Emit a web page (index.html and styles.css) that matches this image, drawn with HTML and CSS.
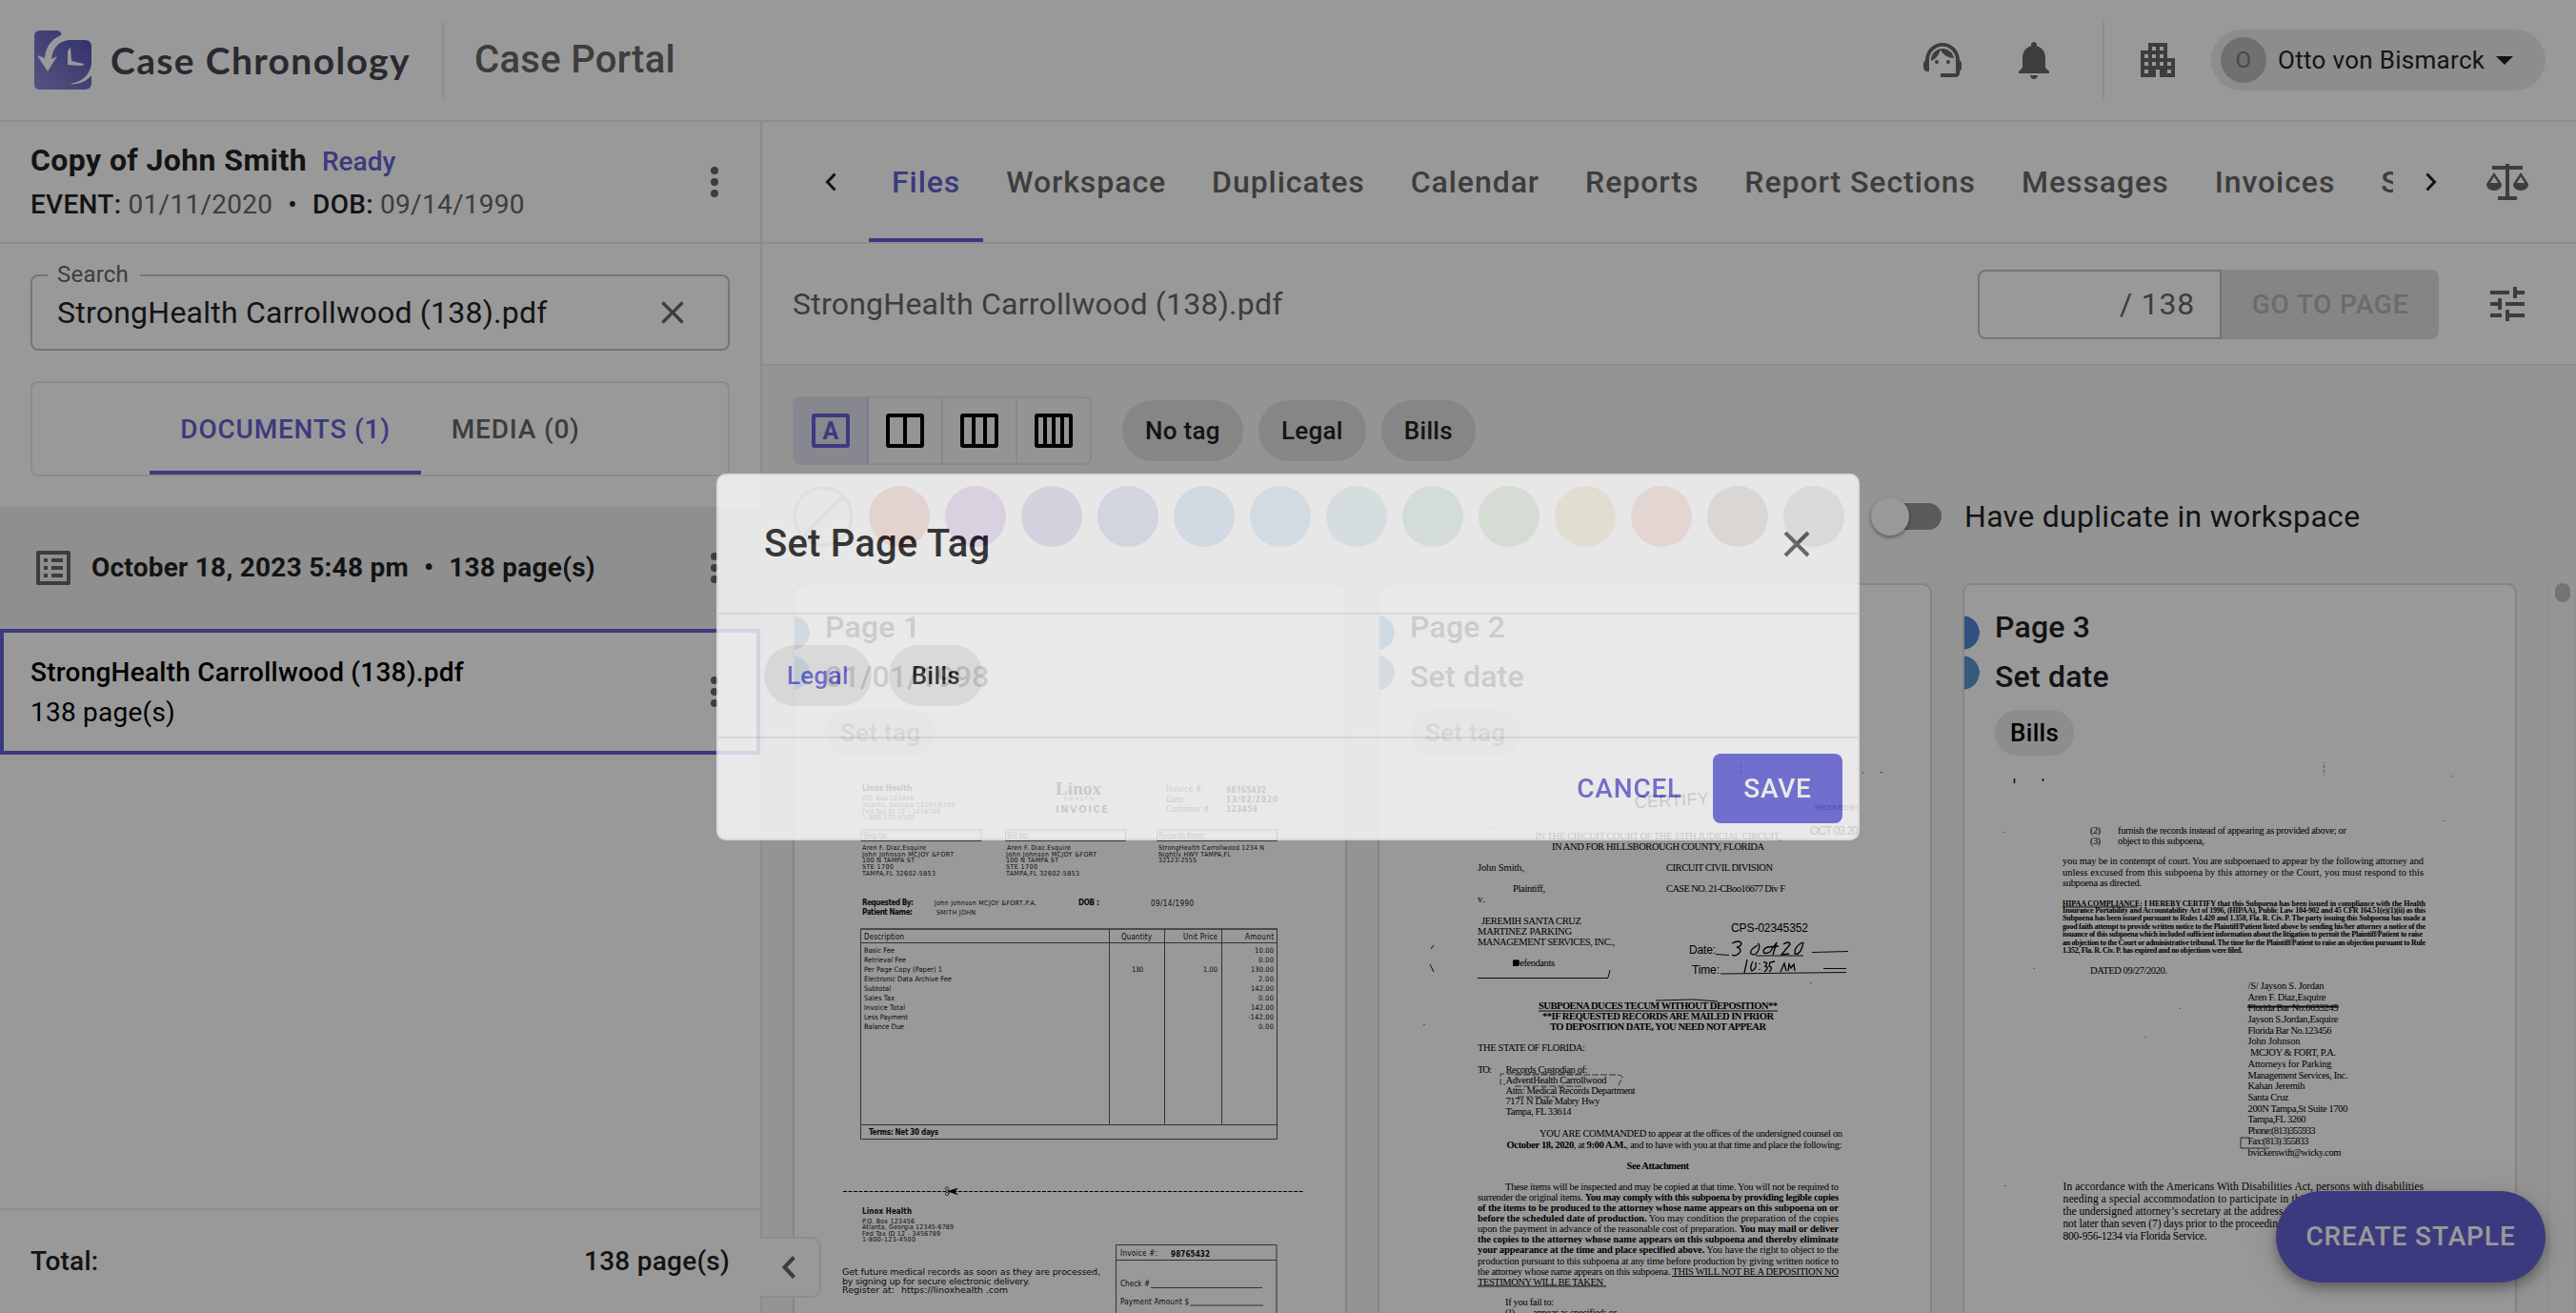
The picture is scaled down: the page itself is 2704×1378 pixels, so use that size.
FILE: index.html
```html
<!DOCTYPE html>
<html lang="en">
<head>
<meta charset="utf-8">
<title>Case Portal</title>
<link rel="stylesheet" href="styles.css">
</head>
<body>
<div class="app">
  <header class="header">
    <svg class="logo" viewBox="0 0 60 62">
      <defs><linearGradient id="lg" x1="0" y1="1" x2="1" y2="0"><stop offset="0" stop-color="#8d8bd8"/><stop offset=".5" stop-color="#7270c4"/><stop offset="1" stop-color="#504db4"/></linearGradient></defs>
      <path fill="url(#lg)" d="M6 0h18q5 1 4 5C18 9 12 17 11 29l-8-3 11 17 10-16-6 3C19 20 24 12 36 10h17q7 0 7 7v19c-3 12-10 18-23 20 11 1 18-3 23-9v8q0 7-7 7H6q-6 0-6-6V6q0-6 6-6z"/>
      <path fill="#fff" d="M35 36V22q2-4 3-4l1 14 13 3q1 1-3 2z"/>
    </svg>
    <span class="brand">Case Chronology</span>
    <span class="vline"></span>
    <span class="product">Case Portal</span>
    <span class="grow"></span>
    <svg class="ic support" viewBox="0 0 24 24"><path d="M21 12.22C21 6.73 16.74 3 12 3c-4.69 0-9 3.65-9 9.28-.6.34-1 .98-1 1.72v2c0 1.1.9 2 2 2h1v-6.1c0-3.87 3.13-7 7-7s7 3.13 7 7V19h-8v2h8c1.1 0 2-.9 2-2v-1.22c.59-.31 1-.92 1-1.64v-2.3c0-.7-.41-1.31-1-1.62z"/><circle cx="9" cy="13" r="1"/><circle cx="15" cy="13" r="1"/><path d="M18 11.03C17.52 8.18 15.04 6 12.05 6c-3.03 0-6.29 2.51-6.03 6.45 2.47-1.01 4.33-3.21 4.86-5.89 1.31 2.63 4 4.44 7.12 4.47z"/></svg>
    <svg class="ic bell" viewBox="0 0 24 24"><path d="M12 22c1.1 0 2-.9 2-2h-4c0 1.1.89 2 2 2zm6-6v-5c0-3.07-1.64-5.64-4.5-6.32V4c0-.83-.67-1.5-1.5-1.5s-1.5.67-1.5 1.5v.68C7.63 5.36 6 7.92 6 11v5l-2 2v1h16v-1l-2-2z"/></svg>
    <span class="vline v2"></span>
    <svg class="ic building" viewBox="0 0 24 24"><path d="M17 11V3H7v4H3v14h8v-4h2v4h8V11h-4zM7 19H5v-2h2v2zm0-4H5v-2h2v2zm0-4H5V9h2v2zm4 4H9v-2h2v2zm0-4H9V9h2v2zm0-4H9V5h2v2zm4 8h-2v-2h2v2zm0-4h-2V9h2v2zm0-4h-2V5h2v2zm4 12h-2v-2h2v2zm0-4h-2v-2h2v2z"/></svg>
    <div class="user"><span class="avatar">O</span><span>Otto von Bismarck</span><i class="caret"></i></div>
  </header>

  <div class="body">
    <aside class="side">
      <div class="case">
        <div class="case-info">
          <div class="l1"><b>Copy of John Smith</b><span class="ready">Ready</span></div>
          <div class="l2"><b>EVENT:</b> <span class="mut">01/11/2020</span><span class="bul">•</span><b>DOB:</b> <span class="mut">09/14/1990</span></div>
        </div>
        <span class="dots"><i></i><i></i><i></i></span>
      </div>
      <div class="side-top">
        <div class="search"><span class="lbl">Search</span><span>StrongHealth Carrollwood (138).pdf</span>
          <svg class="x" viewBox="0 0 24 24"><path d="M19 6.41 17.59 5 12 10.59 6.41 5 5 6.41 10.59 12 5 17.59 6.41 19 12 13.41 17.59 19 19 17.59 13.41 12z"/></svg></div>
        <div class="dtabs"><span class="on">DOCUMENTS (1)</span><span>MEDIA (0)</span></div>
      </div>
      <div class="group">
        <svg class="ic" viewBox="0 0 24 24"><path d="M19 5v14H5V5h14m1.1-2H3.900c-.5 0-.9.4-.9.9v16.200c0 .4.4.9.9.9h16.200c.4 0 .9-.5.9-.9V3.900c0-.5-.5-.9-.9-.9zM11 7h6v2h-6V7zm0 4h6v2h-6v-2zm0 4h6v2h-6zM7 7h2v2H7zm0 4h2v2H7zm0 4h2v2H7z"/></svg>
        <b>October 18, 2023 5:48 pm</b><b class="bul">•</b><b>138 page(s)</b>
        <span class="dots"><i></i><i></i><i></i></span>
      </div>
      <div class="file">
        <div><b>StrongHealth Carrollwood (138).pdf</b><span>138 page(s)</span></div>
        <span class="dots"><i></i><i></i><i></i></span>
      </div>
      <span class="grow"></span>
      <div class="total"><b>Total:</b><b>138 page(s)</b></div>
      <div class="collapse"><svg viewBox="0 0 15 24"><path d="M13 1.500 3 12l10 10.500" fill="none" stroke="#666" stroke-width="4"/></svg></div>
    </aside>

    <main class="main">
      <nav class="nav">
        <svg class="arr" viewBox="0 0 12 20"><path d="M10.500 1.500 2.500 10l8 8.500"/></svg>
        <div class="tabs"><span class="on">Files</span><span>Workspace</span><span>Duplicates</span><span>Calendar</span><span>Reports</span><span>Report Sections</span><span>Messages</span><span>Invoices</span><span>S</span></div>
        <svg class="arr right" viewBox="0 0 12 20"><path d="M1.500 1.500l8 8.500-8 8.500"/></svg>
        <svg class="scales" viewBox="0 0 44 38"><path d="M6 2h32v4H24v28h8v4H12v-4h8V6H6z M20 0h4v3h-4z"/><path fill-rule="evenodd" d="M8 9l8 12c0 4-3 7-8 7s-8-3-8-7zM8 13.500 3.800 20h8.400zM36 9l8 12c0 4-3 7-8 7s-8-3-8-7zM36 13.500 31.800 20h8.400z"/></svg>
      </nav>
      <div class="bar">
        <span>StrongHealth Carrollwood (138).pdf</span><span class="grow"></span>
        <span class="pageno">/ 138</span><span class="go">GO TO PAGE</span>
        <svg class="ic tune" viewBox="0 0 24 24"><path d="M3 17v2h6v-2H3zM3 5v2h10V5H3zm10 16v-2h8v-2h-8v-2h-2v6h2zM7 9v2H3v2h4v2h2V9H7zm14 4v-2H11v2h10zm-6-4h2V7h4V5h-4V3h-2v6z"/></svg>
      </div>
      <div class="filters">
        <div class="views">
          <span class="on"><svg viewBox="0 0 40 36"><rect x="2" y="2" width="36" height="32" rx="1"/><text x="20" y="27" text-anchor="middle">A</text></svg></span>
          <span><svg viewBox="0 0 40 36"><rect x="2" y="2" width="36" height="32" rx="1"/><path d="M20 3v30"/></svg></span>
          <span><svg viewBox="0 0 40 36"><rect x="2" y="2" width="36" height="32" rx="1"/><path d="M14 3v30M26 3v30"/></svg></span>
          <span><svg viewBox="0 0 40 36"><rect x="2" y="2" width="36" height="32" rx="1"/><path d="M11 3v30M20 3v30M29 3v30"/></svg></span>
        </div>
        <span class="chip">No tag</span><span class="chip">Legal</span><span class="chip">Bills</span>
      </div>
      <div class="colors">
        <svg class="none" viewBox="0 0 64 64"><circle cx="32" cy="32" r="30"/><path d="M11 53 53 11"/></svg>
        <i style="background:#cf5b52"></i><i style="background:#8a53b8"></i><i style="background:#6a58b8"></i><i style="background:#5865b8"></i><i style="background:#5087d3"></i><i style="background:#5796cf"></i><i style="background:#6bacb5"></i><i style="background:#64a099"></i><i style="background:#6ba05a"></i><i style="background:#c4ac52"></i><i style="background:#cc7058"></i><i style="background:#8a7463"></i><i style="background:#7d8794"></i>
        <span class="switch"></span><span>Have duplicate in workspace</span>
      </div>
      <div class="pages">
        <section class="card">
          <div class="head"><b>Page 1</b><b>01/01/1998</b><span class="tag unset">Set tag</span></div>
          <svg class="doc sans" viewBox="834 800 578 578">
            <text class="b" x="905" y="830" textLength="52">Linox Health</text>
            <g class="sm"><text x="905" y="840" textLength="54">P.O. Box 123456</text><text x="905" y="847" textLength="97">Atlanta, Georgia 12345-6789</text><text x="905" y="853.500" textLength="82">Fed Tax ID 12 - 3456789</text><text x="905" y="860" textLength="55">1-800-123-4500</text></g>
            <text class="s b" x="1108" y="834" font-size="19" textLength="48">Linox</text><text x="1117" y="840" font-size="6" textLength="31">HEALTH</text><text class="b" x="1108" y="853" font-size="11" textLength="55">INVOICE</text>
            <text x="1224" y="831" textLength="40">Invoice #:</text><text class="b" x="1287" y="832" textLength="42">98765432</text>
            <text x="1224" y="842" textLength="20">Date:</text><text class="b" x="1287" y="842" textLength="54">13/02/2020</text>
            <text x="1224" y="852" textLength="48">Customer #:</text><text class="b" x="1287" y="852" textLength="33">123456</text>
            <path class="ln" d="M904 882.500v-11.500h126v11.500zM1055.500 882.500v-11.500h126v11.500zM1214.500 882.500v-11.500h126v11.500z"/>
            <text x="906" y="880" textLength="26">Ship to:</text><text x="1057" y="880" textLength="23">Bill to:</text><text x="1216" y="880" textLength="49">Records from:</text>
            <g class="sm"><text x="905" y="891.500" textLength="67">Aren F. Diaz,Esquire</text><text x="905" y="898.500" textLength="96">John Johnson MCJOY &amp;FORT</text><text x="905" y="905" textLength="55">100 N TAMPA ST</text><text x="905" y="912" textLength="33">STE 1700</text><text x="905" y="918.500" textLength="77">TAMPA,FL 32602-5853</text>
            <text x="1057" y="891.500" textLength="67">Aren F. Diaz,Esquire</text><text x="1056" y="898.500" textLength="95">John Johnson MCJOY &amp;FORT</text><text x="1056" y="905" textLength="55">100 N TAMPA ST</text><text x="1056" y="912" textLength="33">STE 1700</text><text x="1056" y="918.500" textLength="77">TAMPA,FL 32602-5853</text>
            <text x="1216" y="891.500" textLength="111">StrongHealth Carrollwood 1234 N</text><text x="1216" y="898.500" textLength="76">Nightly HWY TAMPA,FL</text><text x="1216" y="905" textLength="40">32123-2555</text></g>
            <text class="b" x="905" y="950" textLength="54">Requested By:</text><text class="sm" x="981" y="950" textLength="107">John Johnson MCJOY &amp;FORT,P.A.</text><text class="b" x="1132" y="950" textLength="22">DOB :</text><text x="1208" y="951" textLength="45">09/14/1990</text>
            <text class="b" x="905" y="960" textLength="53">Patient Name:</text><text class="sm" x="983" y="960" textLength="41">SMITH JOHN</text>
            <path class="ln" d="M903.500 975v220.500h437V975M903 989.500h437M903 1180.500h437M1164.500 975v206M1222.500 975v206M1282.500 975v206"/><path class="ln th" d="M903 975h438"/>
            <text x="907" y="986" textLength="42">Description</text><text x="1177" y="986" textLength="32">Quantity</text><text x="1242" y="986" textLength="36">Unit Price</text><text x="1307" y="986" textLength="30">Amount</text>
            <g class="md"><text x="907" y="999.500" textLength="32">Basic Fee</text><text x="907" y="1009.500" textLength="44">Retrieval Fee</text><text x="907" y="1019.500" textLength="82">Per Page Copy (Paper) 1</text><text x="907" y="1029.500" textLength="92">Electronic Data Archive Fee</text><text x="907" y="1039.500" textLength="28">Subtotal</text><text x="907" y="1049.500" textLength="32">Sales Tax</text><text x="907" y="1060" textLength="43">Invoice Total</text><text x="907" y="1070" textLength="46">Less Payment</text><text x="907" y="1080" textLength="42">Balance Due</text>
            <text x="1188" y="1019.500" textLength="12">130</text><text x="1263" y="1019.500" textLength="15">1.00</text>
            <text x="1317" y="999.500" textLength="20">10.00</text><text x="1321" y="1009.500" textLength="16">0.00</text><text x="1313" y="1019.500" textLength="24">130.00</text><text x="1321" y="1029.500" textLength="16">2.00</text><text x="1313" y="1039.500" textLength="24">142.00</text><text x="1321" y="1049.500" textLength="16">0.00</text><text x="1313" y="1060" textLength="24">142.00</text><text x="1310" y="1070" textLength="27">-142.00</text><text x="1321" y="1080" textLength="16">0.00</text></g>
            <text class="b" x="912" y="1190.500" textLength="73">Terms: Net 30 days</text>
            <path d="M885 1250.500h484" stroke="#000" stroke-dasharray="4 1.500" fill="none"/><path d="M998 1249.500l7-2-4 3 4 3-7-2.500zM998 1250.500l-3-2M998 1250.500l-3 2.500" stroke="#000"/><circle cx="994" cy="1247.500" r="1.700" class="ln"/><circle cx="994" cy="1253" r="1.700" class="ln"/>
            <text class="b" x="905" y="1273.500" textLength="52">Linox Health</text><g class="sm"><text x="905" y="1283.500" textLength="55">P.O. Box 123456</text><text x="905" y="1290" textLength="96">Atlanta, Georgia 12345-6789</text><text x="905" y="1296.500" textLength="82">Fed Tax ID 12 - 3456789</text><text x="905" y="1303" textLength="56">1-800-123-4500</text></g>
            <g class="lg"><text x="884" y="1338" textLength="271">Get future medical records as soon as they are processed,</text><text x="884" y="1347.500" textLength="197">by signing up for secure electronic delivery.</text><text x="884" y="1356.500" textLength="55">Register at:</text><text x="946" y="1356.500" textLength="112">https://linoxhealth .com</text></g>
            <path class="ln" d="M1171.500 1380v-73.500h168.500v73.500M1171 1322.500h169M1208 1351.500h117M1249 1370h77"/>
            <text x="1176" y="1318" textLength="39">Invoice #:</text><text class="b" x="1229" y="1318.500" textLength="41">98765432</text><text x="1176" y="1350" textLength="31">Check #</text><text x="1176" y="1368.500" textLength="72">Payment Amount $</text>
          </svg>
        </section>
        <section class="card">
          <div class="head"><b>Page 2</b><b>Set date</b><span class="tag unset">Set tag</span></div>
          <svg class="doc serif" viewBox="1448 800 578 578">
            <path class="ink faint" d="M1505 817h6M1520 817h2M1535 818h8M1551 869h20"/><path class="ink" stroke-dasharray="3 2" stroke-width=".7" d="M1827.500 798v14"/><path class="ink" d="M1955 811h1M1974 810.500h1.500"/>
            <text class="a" x="1716" y="848" font-size="18" textLength="78" transform="rotate(-3 1716 848)">CERTIFY</text>
            <text class="a" x="1905" y="850" font-size="8" textLength="46">RECEIVED BY</text><text class="a" x="1900" y="876" font-size="12" textLength="51">OCT 03 20</text>
            <text x="1611.500" y="881" textLength="258">IN THE CIRCUIT COURT OF THE 13TH JUDICIAL CIRCUIT,</text><text x="1629" y="892" textLength="223">IN AND FOR HILLSBOROUGH COUNTY, FLORIDA</text>
            <text x="1551" y="914" textLength="49">John Smith,</text><text x="1749" y="914" textLength="112">CIRCUIT CIVIL DIVISION</text>
            <text x="1588" y="936" textLength="34">Plaintiff,</text><text x="1749" y="936" textLength="125">CASE NO. 21-CBoo16677 Div F</text><text x="1551" y="947" textLength="8">v.</text>
            <text x="1555" y="969.500" textLength="105">JEREMIH SANTA CRUZ</text><text x="1551" y="980.500" textLength="99">MARTINEZ PARKING</text><text x="1551" y="992" textLength="144">MANAGEMENT SERVICES, INC.,</text>
            <text class="a" x="1817" y="978" font-size="12" textLength="81">CPS-02345352</text><text class="a" x="1773" y="1001" font-size="12" textLength="28">Date:</text><text class="a" x="1776" y="1022" font-size="12" textLength="29">Time:</text>
            <path class="hand" d="M1818 990q8-4 10 0-1 4-5 4 7 2 2 7-4 3-7 1M1845 992q-9 5-7 9 5 3 8-4 2-6-1-7M1856 994q-5 1-5 5 1 3 7 0l7-10-4 13M1855 994l12-1M1872 991q6-4 7 0l-9 11 8-1M1892 989q-9 5-8 12 6 2 9-12M1834 1007l-3 14M1840 1009q-4 6-1 10 5-2 4-9M1847 1011v1M1847 1017v1M1851 1010q6-1 2 4 5 1-1 6M1863 1009l-5 1-1 4q5 1 0 6M1869 1020l4-9 2 8M1877 1019l1-7 2 4 3-4 1 7"/>
            <path class="ink" d="M1801 1001.500l14 1M1843 1003h50M1902 999.500l38-1M1806 1022l132-1.500M1914 1016.500h24M1551 1026.500h137M1690 1018l-2 8M1505 992l-3 4M1501 1012l4 8M1495 1075v1M1901 1031v1M1738 1050l40-1 25 2"/>
            <text x="1588" y="1014" textLength="44">Defendants</text><path d="M1588 1008h6v6h-6z"/>
            <g class="b"><text x="1615" y="1059" textLength="251">SUBPOENA DUCES TECUM WITHOUT DEPOSITION**</text><text x="1619" y="1069.500" textLength="243">**IF REQUESTED RECORDS ARE MAILED IN PRIOR</text><text x="1627" y="1081" textLength="227">TO DEPOSITION DATE, YOU NEED NOT APPEAR</text></g><path class="ink" d="M1615 1061h251"/>
            <text x="1551" y="1103" textLength="113">THE STATE OF FLORIDA:</text><text x="1551" y="1125.500" textLength="15">TO:</text><text x="1580.500" y="1125.500" textLength="86">Records Custodian of:</text><text x="1580.500" y="1137" textLength="106">AdventHealth Carrollwood</text><text x="1580.500" y="1148" textLength="136">Attn: Medical Records Department</text><text x="1580.500" y="1159" textLength="99">7171 N Dale Mabry Hwy</text><text x="1580.500" y="1170" textLength="69">Tampa, FL 33614</text>
            <path class="ink" stroke-width=".7" stroke-dasharray="7 2" d="M1582 1127h80M1579 1127h-4v11h5M1590 1128h104q12 0 8 4l-3 7M1590 1140h72M1593 1151h40"/>
            <text x="1616" y="1193" textLength="318">YOU ARE COMMANDED to appear at the offices of the undersigned counsel on</text><text x="1581.500" y="1204.500" textLength="352"><tspan class="b">October 18, 2020</tspan>, at <tspan class="b">9:00 A.M.</tspan>, and to have with you at that time and place the following:</text>
            <text class="b" x="1707.500" y="1227" textLength="65.500">See Attachment</text>
            <text x="1580" y="1249" textLength="350">These items will be inspected and may be copied at that time. You will not be required to</text>
            <text x="1551" y="1260" textLength="379">surrender the original items. <tspan class="b">You may comply with this subpoena by providing legible copies</tspan></text>
            <text class="b" x="1551" y="1271" textLength="379">of the items to be produced to the attorney whose name appears on this subpoena on or</text>
            <text x="1551" y="1282" textLength="379"><tspan class="b">before the scheduled date of production.</tspan> You may condition the preparation of the copies</text>
            <text x="1551" y="1293" textLength="379">upon the payment in advance of the reasonable cost of preparation. <tspan class="b">You may mail or deliver</tspan></text>
            <text class="b" x="1551" y="1304" textLength="379">the copies to the attorney whose name appears on this subpoena and thereby eliminate</text>
            <text x="1551" y="1315" textLength="379"><tspan class="b">your appearance at the time and place specified above.</tspan> You have the right to object to the</text>
            <text x="1551" y="1326.500" textLength="379">production pursuant to this subpoena at any time before production by giving written notice to</text>
            <text x="1551" y="1337.500" textLength="379">the attorney whose name appears on this subpoena. THIS WILL NOT BE A DEPOSITION  NO</text>
            <text x="1551" y="1348.500" textLength="132">TESTIMONY WILL BE TAKEN</text><path class="ink" d="M1755 1339.500h175M1551 1350h135"/>
            <text x="1580" y="1370" textLength="51">If you fail to:</text><text x="1580" y="1381" textLength="10">(1)</text><text x="1609" y="1381" textLength="88">appear as specified; or</text>
          </svg>
        </section>
        <section class="card">
          <div class="head"><b>Page 3</b><b>Set date</b><span class="tag">Bills</span></div>
          <svg class="doc serif" viewBox="2062 800 578 578">
            <path class="ink" d="M2114.500 817v5M2144.500 817v3" stroke-width="1.500"/><path class="ink" stroke-dasharray="3 2" stroke-width=".5" d="M2439.500 798v16"/><path class="ink" d="M2573 814v1M2566 861v1M2103 873v1M2135 1016v1M2288 1058v1M2252 1088v1M2105 1244v1" stroke-width=".8"/>
            <text x="2194" y="874.500" textLength="11">(2)</text><text x="2223" y="874.500" textLength="240">furnish the records instead of appearing as provided above; or</text><text x="2194" y="886" textLength="11">(3)</text><text x="2223" y="886" textLength="91">object to this subpoena,</text>
            <text x="2165" y="907" textLength="379">you may be in contempt of court.  You are subpoenaed to appear by the following attorney and</text><text x="2165" y="918.500" textLength="379">unless excused from this subpoena by this attorney or the Court, you must respond to this</text><text x="2165" y="929.500" textLength="83">subpoena as directed.</text>
            <g class="b" font-size="8"><text x="2165" y="950.500" textLength="381">HIPAA COMPLIANCE: I HEREBY CERTIFY that this Subpoena has been issued in compliance with the Health</text><text x="2165" y="957.500" textLength="381">Insurance Portability and Accountability Act of 1996, (HIPAA), Public Law 104-902 and 45 CFR 164.51(e)(1)(ii) as this</text><text x="2165" y="966" textLength="381">Subpoena has been issued pursuant to Rules 1.420 and 1.358, Fla. R. Civ. P. The party issuing this Subpoena has made a</text><text x="2165" y="974.500" textLength="381">good faith attempt to provide written notice to the Plaintiff/Patient listed above by sending his/her attorney a notice of the</text><text x="2165" y="983" textLength="378">issuance of this subpoena which included sufficient information about the litigation to permit the Plaintiff/Patient to raise</text><text x="2165" y="991.500" textLength="381">an objection to the Court or administrative tribunal. The time for the Plaintiff/Patient to raise an objection pursuant to Rule</text><text x="2165" y="1000" textLength="189">1.352, Fla. R. Civ. P. has expired and no objections were filed.</text></g><path class="ink" d="M2165 952h79"/>
            <text x="2194" y="1021.500" textLength="81">DATED 09/27/2020.</text>
            <text x="2359.500" y="1038" textLength="80">/S/ Jayson S. Jordan</text><text x="2359.500" y="1049.500" textLength="82">Aren F. Diaz,Esquire</text><text x="2359.500" y="1061" textLength="95">Florida Bar No.6633245</text><text x="2359.500" y="1073" textLength="95">Jayson S.Jordan,Esquire</text><text x="2359.500" y="1084.500" textLength="88">Florida Bar No.123456</text><text x="2359.500" y="1096" textLength="55">John Johnson</text><text x="2362" y="1108" textLength="90">MCJOY &amp; FORT, P.A.</text><text x="2359.500" y="1120" textLength="88">Attorneys for Parking</text><text x="2359.500" y="1131.500" textLength="105">Management Services, Inc.</text><text x="2359.500" y="1143" textLength="60">Kahan Jeremih</text><text x="2359.500" y="1155" textLength="43">Santa Cruz</text><text x="2359.500" y="1166.500" textLength="105">200N Tampa,St  Suite 1700</text><text x="2359.500" y="1178" textLength="61">Tampa,FL 3260</text><text x="2359.500" y="1189.500" textLength="71">Phone:(813)355933</text><text x="2359.500" y="1201" textLength="64">Fax:(813) 355833</text><text x="2359.500" y="1213" textLength="98">bvickerswift@wicky.com</text>
            <path class="ink" stroke-width="2" d="M2359 1056.500h96"/><path class="ink" stroke-width=".8" d="M2361 1194h-9v11h30"/>
            <g font-size="11.500"><text x="2165.500" y="1249" textLength="378.500">In accordance with the Americans With Disabilities Act, persons with disabilities</text><text x="2165.500" y="1262" textLength="257">needing a special accommodation to participate in this</text><text x="2165.500" y="1275" textLength="231">the undersigned attorney’s secretary at the address</text><text x="2165.500" y="1288" textLength="231">not later than seven (7) days prior to the proceeding</text><text x="2165.500" y="1301" textLength="151">800-956-1234 via Florida  Service.</text></g>
          </svg>
        </section>
      </div>
      <div class="scroll"><i></i></div>
      <button class="fab">CREATE STAPLE</button>
    </main>
  </div>
</div>
<div class="backdrop">
  <div class="modal">
    <div class="m-head"><span>Set Page Tag</span><svg viewBox="0 0 28 28"><path d="M2 2l24 24M26 2 2 26"/></svg></div>
    <div class="m-body"><span class="chip sel">Legal</span><span class="chip">Bills</span></div>
    <div class="m-foot"><span class="cancel">CANCEL</span><span class="save">SAVE</span></div>
  </div>
</div>
</body>
</html>
```
FILE: styles.css
```css
* { box-sizing: border-box; }
body { margin: 0; width: 2704px; height: 1378px; overflow: hidden; font: 28px/40px Roboto, sans-serif; letter-spacing: .24px; color: #222; background: #fff; }
b { font-weight: 500; }
i { display: block; font-style: normal; }
.grow { flex: 1; }
.app { display: flex; flex-direction: column; height: 1378px; }
.ic { width: 48px; height: 48px; fill: #666; flex: none; }
.dots { display: flex; flex-direction: column; gap: 4px; width: 8px; margin-left: auto; }
.dots i { width: 8px; height: 8px; border-radius: 50%; background: #666; }

.header { display: flex; align-items: center; height: 128px; flex: none; padding: 0 32px 0 36px; border-bottom: 2px solid #eaeaea; }
.logo { width: 60px; height: 62px; }
.brand { font: 700 39px/60px Lato, sans-serif; color: #454550; margin-left: 20px; width: 348px; letter-spacing: 1.35px; white-space: nowrap; }
.vline { width: 2px; height: 80px; background: #eaeaea; }
.product { font-size: 40px; font-weight: 500; color: #666; margin-left: 32px; letter-spacing: .3px; }
.bell { margin: 0 48px; }
.v2 { margin: 0 32px 0 0; }
.user { display: flex; align-items: center; width: 351px; height: 64px; border-radius: 32px; background: #ebebeb; margin-left: 32px; padding-left: 10px; white-space: nowrap; font-size: 26px; letter-spacing: .3px; }
.avatar { width: 48px; height: 48px; border-radius: 50%; background: #bbb; color: #7a7a7a; font-size: 24px; line-height: 48px; text-align: center; margin-right: 12px; }
.caret { border: 9px solid transparent; border-top: 9px solid #222; border-bottom: 0; margin-left: 12px; }

.body { display: flex; flex: 1; min-height: 0; }
.side { position: relative; display: flex; flex-direction: column; width: 800px; flex: none; border-right: 2px solid #eaeaea; }
.case { display: flex; align-items: center; height: 128px; border-bottom: 2px solid #eaeaea; padding: 0 44px 0 32px; }
.l1 { line-height: 46px; }
.l1 b { font-size: 32px; font-weight: 700; letter-spacing: .4px; }
.ready { color: #6462d4; margin-left: 16px; font-weight: 500; letter-spacing: 0; }
.l2 { line-height: 44px; letter-spacing: .28px; }
.mut { color: #666; }
.bul { margin: 0 16px; }
.side-top { height: 276px; padding: 32px 32px 0; }
.search { position: relative; display: flex; align-items: center; justify-content: space-between; height: 80px; border: 2px solid #c4c4c4; border-radius: 8px; padding: 0 38px 0 26px; font-size: 32px; }
.lbl { position: absolute; left: 16px; top: -20px; padding: 0 12px 0 10px; background: #fff; font-size: 24px; color: #666; line-height: 36px; letter-spacing: .2px; }
.x { width: 40px; height: 40px; fill: #666; }
.dtabs { display: flex; justify-content: center; height: 100px; margin-top: 32px; border: 2px solid #eaeaea; border-radius: 8px; font-weight: 500; letter-spacing: .8px; color: #666; }
.dtabs span { padding: 0 32px; line-height: 98px; height: 96px; }
.dtabs .on { color: #6462d4; border-bottom: 4px solid #6462d4; }
.group { display: flex; align-items: center; height: 128px; background: #eee; padding: 0 44px 0 32px; }
.group .ic { margin-right: 16px; }
.group b { font-weight: 700; }
.file { display: flex; align-items: center; height: 132px; border: 4px solid #6462d4; padding: 0 40px 0 28px; color: #000; }
.file b, .file div span { display: block; line-height: 42px; }
.file div { padding-top: 2px; }
.total { display: flex; justify-content: space-between; height: 110px; border-top: 2px solid #eaeaea; padding: 34px 32px 0; }
.collapse { position: absolute; left: 798px; top: 1170px; width: 64px; height: 64px; border: 2px solid #eaeaea; border-left: 0; border-radius: 0 10px 10px 0; background: #fff; padding: 18px 22px; z-index: 2; }
.collapse svg { display: block; width: 16px; height: 24px; }

.main { position: relative; display: flex; flex-direction: column; flex: 1; min-width: 0; background: #f7f7f7; }
.nav { display: flex; align-items: center; height: 128px; flex: none; background: #fff; border-bottom: 2px solid #eaeaea; padding-left: 66px; }
.arr { width: 12px; height: 20px; fill: none; stroke: #222; stroke-width: 3; flex: none; }
.tabs { display: flex; width: 1600px; height: 126px; margin: 0 34px; overflow: hidden; font-size: 32px; font-weight: 500; color: #666; letter-spacing: .94px; line-height: 127px; white-space: nowrap; }
.tabs span { flex: none; padding: 0 24px; }
.tabs .on { color: #6462d4; border-bottom: 4px solid #6462d4; }
.scales { width: 44px; height: 38px; fill: #666; margin-left: 52px; }
.bar { display: flex; align-items: center; height: 128px; flex: none; background: #fff; border-bottom: 2px solid #eaeaea; padding: 0 48px 0 32px; font-size: 32px; color: #666; }
.pageno { width: 256px; height: 73px; border: 2px solid #c4c4c4; border-radius: 8px 0 0 8px; text-align: right; padding-right: 26px; line-height: 68px; letter-spacing: .8px; }
.go { width: 228px; height: 73px; border-radius: 0 8px 8px 0; background: #dedede; color: #b2b2b2; font-size: 28px; font-weight: 500; line-height: 73px; text-align: center; letter-spacing: .8px; }
.tune { margin-left: 48px; }
.filters { display: flex; align-items: center; height: 72px; margin: 32px 0 0 32px; flex: none; }
.views { display: flex; width: 314px; height: 72px; border: 2px solid #e4e4e4; border-radius: 8px; margin-right: 16px; overflow: hidden; }
.views span { flex: 1; display: flex; align-items: center; justify-content: center; border-right: 2px solid #e4e4e4; }
.views span:last-child { border: 0; }
.views svg { width: 40px; height: 36px; fill: none; stroke: #000; stroke-width: 4; }
.views .on { background: #e1e1f0; border-color: #cfcee8; }
.views .on svg { stroke: #6462d4; }
.views text { font: 700 25px Roboto, sans-serif; letter-spacing: 0; fill: #6462d4; stroke: none; }
.chip { height: 64px; border-radius: 32px; background: #dfdfdf; padding: 0 24px; line-height: 65px; font-size: 26px; font-weight: 500; margin-left: 16px; letter-spacing: .3px; }
.colors { display: flex; align-items: center; gap: 16px; height: 64px; flex: none; margin: 22px 0 38px 32px; font-size: 32px; letter-spacing: .3px; }
.colors i, .none { width: 64px; height: 64px; border-radius: 50%; flex: none; }
.none { fill: none; stroke: #bbb; stroke-width: 4; }
.switch { position: relative; width: 68px; height: 28px; border-radius: 14px; background: #989898; margin: 0 8px 0 18px; }
.switch::before { content: ""; position: absolute; left: -6px; top: -6px; width: 40px; height: 40px; border-radius: 50%; background: #fff; box-shadow: 0 2px 4px rgba(0,0,0,.4); }
.pages { display: flex; gap: 32px; padding-left: 32px; flex: 1; min-height: 0; }
.card { width: 582px; height: 800px; flex: none; border: 2px solid #dedede; border-radius: 10px; background: radial-gradient(circle 18px at -2px 50px, #5087d3 17.500px, transparent 18px), radial-gradient(circle 18px at -2px 92px, #5796cf 17.500px, transparent 18px), #fff; background-clip: padding-box; background-origin: padding-box; }
.head { display: flex; flex-direction: column; align-items: flex-start; height: 186px; padding: 18px 32px 0; font-size: 32px; line-height: 52px; letter-spacing: .2px; }
.tag { height: 48px; border-radius: 24px; background: #ebebeb; padding: 0 16px; margin-top: 9px; font-size: 26px; font-weight: 500; line-height: 48px; color: #000; letter-spacing: .3px; }
.unset { color: #757575; background: #eee; }
.doc { display: block; width: 578px; height: 578px; fill: #000; letter-spacing: 0; }
.sans { font: 8px "DejaVu Sans Condensed", "DejaVu Sans", sans-serif; font-stretch: condensed; fill: #111; }
.sm { font-size: 7px; }
.md { font-size: 7.500px; }
.lg { font: 9.500px "DejaVu Sans", sans-serif; }
.serif { font: 10.500px "Liberation Serif", serif; }
.doc .b { font-weight: 700; }
.doc .s { font-family: "Liberation Serif", serif; }
.doc .a { font-family: "Liberation Sans", sans-serif; }
.ln { fill: none; stroke: #555; stroke-width: 1; }
.th { stroke-width: 1.500; }
.ink { fill: none; stroke: #111; }
.faint { stroke-width: .5; stroke-dasharray: 2 3; }
.hand { fill: none; stroke: #000; stroke-width: 1.300; }
.scroll { position: absolute; left: 1874px; top: 484px; width: 30px; bottom: 0; border: 2px solid #f0f0f0; border-width: 0 2px; background: #f9f9f9; }
.scroll i { width: 16px; height: 20px; border-radius: 8px; background: #c1c1c1; margin-left: 6px; }
.fab { position: absolute; right: 32px; bottom: 32px; width: 283px; height: 96px; border: 0; border-radius: 48px; background: #6462d4; color: #fff; font: 500 28px/96px Roboto, sans-serif; letter-spacing: .9px; padding: 0; box-shadow: 0 6px 12px rgba(0,0,0,.3), 0 4px 36px rgba(0,0,0,.14); white-space: nowrap; }

.backdrop { position: absolute; left: 0; top: 0; width: 2704px; height: 1378px; background: rgba(0,0,0,.4); z-index: 5; }
.modal { position: absolute; left: 752px; top: 497px; width: 1200px; height: 385px; display: flex; flex-direction: column; border: 2px solid #ededed; border-radius: 10px; background: #fff; opacity: .784; }
.m-head { display: flex; align-items: center; justify-content: space-between; height: 146px; border-bottom: 2px solid #e8e8e8; padding: 0 50px 0 48px; font-size: 40px; font-weight: 500; color: #1d1d1d; letter-spacing: .2px; }
.m-head svg { width: 28px; height: 28px; fill: none; stroke: #5d5d5d; stroke-width: 4; }
.m-body { display: flex; align-items: center; gap: 2px; height: 130px; border-bottom: 2px solid #e8e8e8; padding: 0 32px; }
.m-body .chip { background: #ebebeb; }
.m-body .sel { color: #6462d8; }
.m-foot { display: flex; align-items: center; justify-content: flex-end; flex: 1; padding-right: 16px; font-weight: 500; letter-spacing: .8px; }
.cancel { color: #6462d8; margin-right: 32px; }
.save { width: 136px; height: 73px; border-radius: 8px; background: #6563db; color: #fff; text-align: center; line-height: 73px; }
```
